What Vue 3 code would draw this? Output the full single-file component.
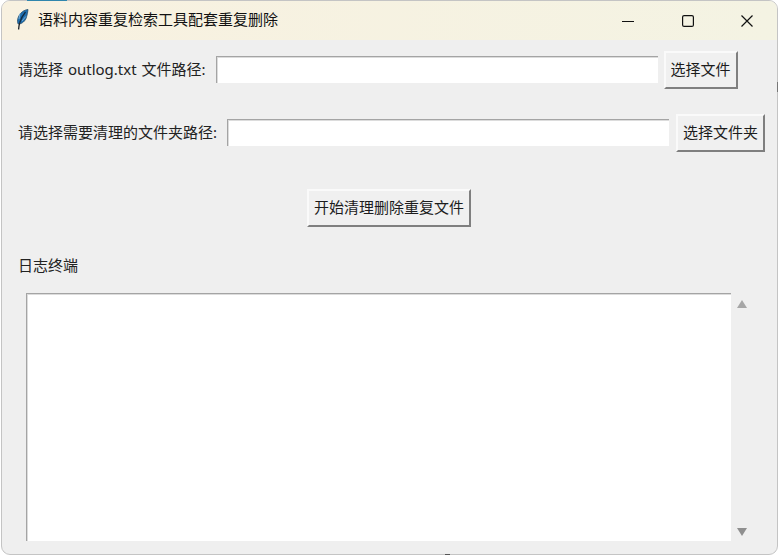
<script setup>
const title = '语料内容重复检索工具配套重复删除'
</script>

<template>
  <div class="desktop">
    <span class="behind sliver"></span>
    <span class="behind edge"></span>
    <span class="behind speck"></span>
    <div class="window">
      <header class="titlebar">
        <svg class="feather" width="13" height="21" viewBox="0 0 13 21">
          <path d="M12 .5C8.500.800 3.800 3.500 2 9c-.8 2.500-.6 4.500.2 6C6 15 9.500 12 10.500 8c.6-2.500 1.500-5 1.500-7.500z" fill="#1f6fb0" stroke="#27506e" stroke-width=".8" />
          <path d="M9.500 3C7 6 5 9.500 3.800 13.500" stroke="#0e2a42" stroke-width="1.300" fill="none" />
          <path d="M4 4.500 3 10M9.800 7.500 6 12" stroke="#7fb4dc" stroke-width=".9" fill="none" />
          <path d="M3.800 13.500C3.200 15.500 2.800 18 2.600 20.500" stroke="#20262c" stroke-width="1.300" fill="none" />
        </svg>
        <span class="title">{{ title }}</span>
        <div class="caption">
          <span class="cap-btn">
            <svg width="12" height="12" viewBox="0 0 12 12"><path d="M0 6.500h12" stroke="#111" stroke-width="1.200" /></svg>
          </span>
          <span class="cap-btn">
            <svg width="12" height="12" viewBox="0 0 12 12"><rect x=".6" y=".6" width="10.800" height="10.800" rx="1.500" fill="none" stroke="#111" stroke-width="1.200" /></svg>
          </span>
          <span class="cap-btn">
            <svg width="12" height="12" viewBox="0 0 12 12"><path d="M.5.500l11 11M11.500.500l-11 11" stroke="#111" stroke-width="1.200" /></svg>
          </span>
        </div>
      </header>

      <main class="content">
        <div class="row row-one">
          <label class="label">请选择 outlog.txt 文件路径:</label>
          <div class="entry"></div>
          <button class="btn btn-file">选择文件</button>
        </div>

        <div class="row row-two">
          <label class="label">请选择需要清理的文件夹路径:</label>
          <div class="entry"></div>
          <button class="btn btn-folder">选择文件夹</button>
        </div>

        <div class="start-row">
          <button class="btn btn-start">开始清理删除重复文件</button>
        </div>

        <div class="log-label">日志终端</div>

        <div class="log-row">
          <div class="log"></div>
          <div class="scroll">
            <span class="arrow up"></span>
            <span class="arrow down"></span>
          </div>
        </div>
      </main>
    </div>
  </div>
</template>

<style scoped>
.desktop {
  position: relative;
  width: 778px;
  height: 555px;
  background: #ffffff;
  overflow: hidden;
  font-family: "Noto Sans", "Noto Sans CJK SC", sans-serif;
  color: #1c1c1c;
}
.behind {
  position: absolute;
  z-index: 2;
}
.sliver {
  left: 27px;
  top: 0;
  width: 40px;
  height: 1px;
  background: #2f86ad;
}
.edge {
  left: 777px;
  top: 82px;
  width: 1px;
  height: 10px;
  background: #777;
}
.speck {
  left: 445px;
  top: 554px;
  width: 5px;
  height: 1px;
  background: #555;
}
.window {
  box-sizing: border-box;
  width: 777px;
  height: 555px;
  margin-left: 1px;
  border: 1px solid #c4c4c4;
  border-radius: 9px;
  overflow: hidden;
  display: flex;
  flex-direction: column;
  background: #efefef;
}
.titlebar {
  height: 39px;
  flex: none;
  display: flex;
  align-items: center;
  padding-left: 14px;
  background: linear-gradient(90deg, #f8f1e0, #f4f3e3);
}
.feather {
  flex: none;
  margin-bottom: 2px;
}
.title {
  margin-left: 9px;
  margin-bottom: 3px;
  font-size: 15px;
  line-height: 20px;
  color: #111;
}
.caption {
  margin-left: auto;
  display: flex;
  margin-right: 1px;
}
.cap-btn {
  width: 59px;
  height: 39px;
  display: flex;
  align-items: center;
  justify-content: center;
}
.cap-btn:first-child {
  padding-right: 1px;
  box-sizing: border-box;
}
.content {
  flex: 1;
  min-height: 0;
  display: flex;
  flex-direction: column;
  padding-left: 16px;
}
.row {
  display: flex;
  align-items: center;
}
.row-one {
  margin-top: 11px;
}
.row-two {
  margin-top: 25px;
}
.label {
  font-size: 15px;
  line-height: 20px;
  word-spacing: 1px;
  white-space: nowrap;
  color: #222;
  margin-bottom: 2px;
}
.entry {
  box-sizing: border-box;
  width: 442px;
  height: 27px;
  margin-left: 10px;
  margin-bottom: 2px;
  background: #fff;
  border-top: 1px solid #a4a4a4;
  border-left: 1px solid #a4a4a4;
  box-shadow: inset 1px 1px 0 #dcdcdc;
  flex: none;
}
.btn {
  box-sizing: border-box;
  height: 38px;
  padding: 0 0 3px 0;
  flex: none;
  font: inherit;
  font-size: 15px;
  line-height: 20px;
  color: #1c1c1c;
  background: #f0f0f0;
  border: 2px solid;
  border-color: #fafafa #7f7f7f #7f7f7f #fafafa;
}
.btn-file {
  width: 74px;
  margin-left: 6px;
}
.btn-folder {
  width: 89px;
  margin-left: 7px;
}
.start-row {
  margin-top: 37px;
  padding-left: 289px;
}
.btn-start {
  width: 164px;
}
.log-label {
  margin-top: 28px;
  font-size: 15px;
  line-height: 20px;
  color: #222;
}
.log-row {
  margin-top: 18px;
  margin-left: 8px;
  display: flex;
  height: 248px;
}
.log {
  box-sizing: border-box;
  width: 705px;
  height: 248px;
  background: #fff;
  border-top: 1px solid #a4a4a4;
  border-left: 1px solid #a4a4a4;
  box-shadow: inset 1px 1px 0 #dcdcdc;
}
.scroll {
  width: 22px;
  display: flex;
  flex-direction: column;
  align-items: center;
  justify-content: space-between;
  padding: 7px 0 5px;
  box-sizing: border-box;
}
.arrow {
  width: 0;
  height: 0;
  border-left: 5.500px solid transparent;
  border-right: 5.500px solid transparent;
}
.up {
  border-bottom: 8px solid #a6a6a6;
}
.down {
  border-top: 8px solid #8f8f8f;
}
</style>
